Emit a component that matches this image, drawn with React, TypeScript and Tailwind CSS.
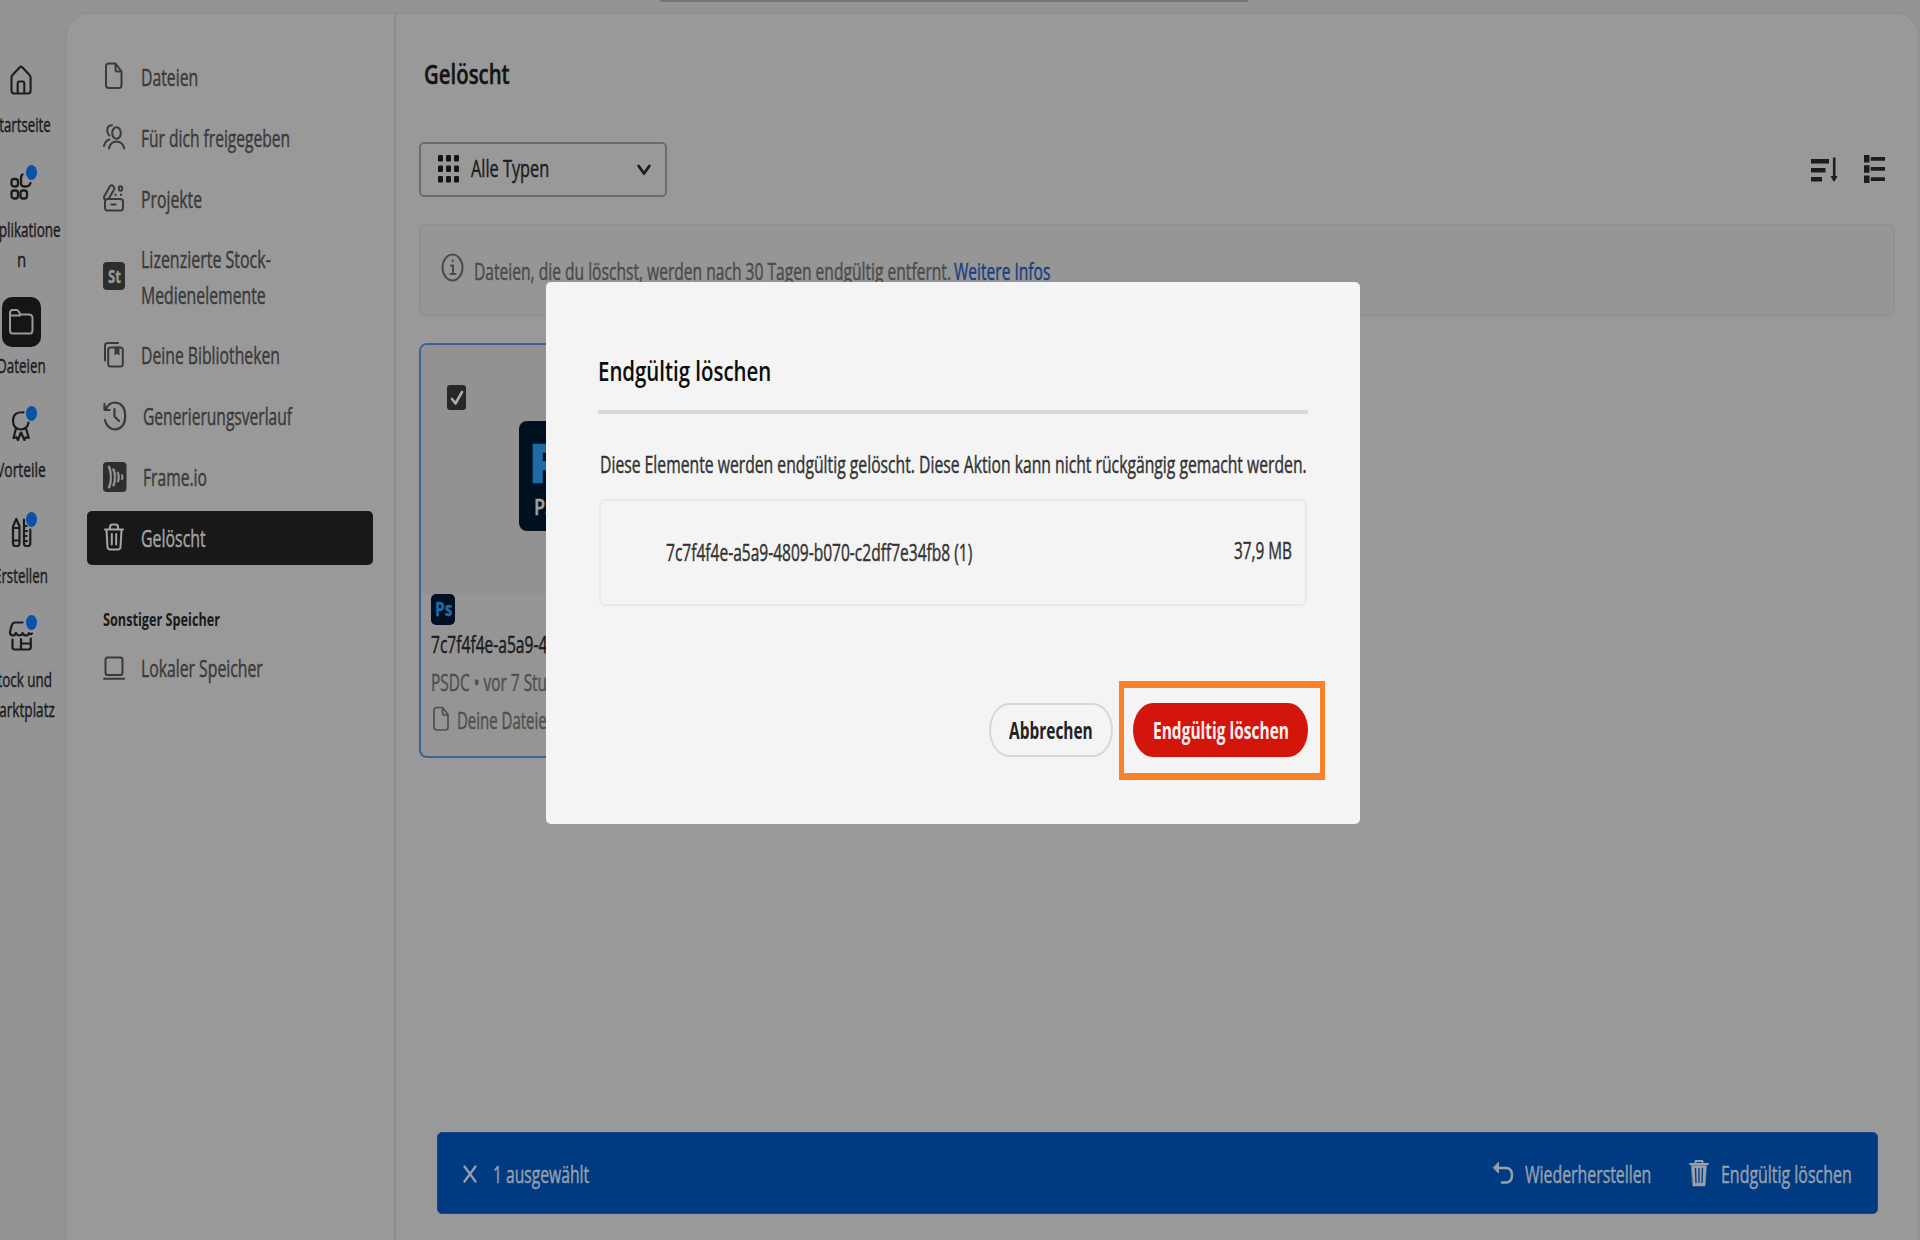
import React, { useLayoutEffect, useRef, useState } from "react";

type FitProps = {
  children: React.ReactNode;
  className: string;
};

// Condensed label: squeezes the text into the width given by its class
const Fit: React.FC<FitProps> = ({ children, className }) => {
  const outer = useRef<HTMLSpanElement>(null);
  const inner = useRef<HTMLSpanElement>(null);
  const [scale, setScale] = useState(1);

  useLayoutEffect(() => {
    if (outer.current && inner.current) {
      setScale(outer.current.clientWidth / inner.current.offsetWidth);
    }
  }, [children]);

  return (
    <span ref={outer} className={`block shrink-0 whitespace-nowrap ${className}`}>
      <span
        ref={inner}
        className="inline-block origin-left"
        style={{ transform: `scaleX(${scale})` }}
      >
        {children}
      </span>
    </span>
  );
};

type IconProps = {
  w: number;
  h: number;
  children: React.ReactNode;
  sw?: number;
  className?: string;
};

const Icon: React.FC<IconProps> = ({ w, h, children, sw = 2, className = "" }) => (
  <svg
    width={w}
    height={h}
    viewBox={`0 0 ${w} ${h}`}
    fill="none"
    stroke="currentColor"
    strokeWidth={sw}
    strokeLinecap="round"
    strokeLinejoin="round"
    className={`shrink-0 ${className}`}
  >
    {children}
  </svg>
);

const FileIcon = () => (
  <Icon w={22} h={28} className="-mt-[3px]">
    <path d="M5.500 1.500h7l6 8v13.500q0 3-2.500 3H5.500q-2.500 0-2.500-3V4.500q0-3 2.500-3zM12.500 2v5q0 2.500 2 2.500h4" />
  </Icon>
);

const UsersIcon = () => (
  <Icon w={22} h={28} className="-mt-[2px]">
    <ellipse cx="13.500" cy="10" rx="4.300" ry="5.800" />
    <path d="M6 25.500q1.500-7 7.500-7t7.800 7M9 2.300Q4 2 4.300 8q.2 3 2 4.500M1 23q1-5 5.500-6.500" />
  </Icon>
);

const ProjectsIcon = () => (
  <Icon w={22} h={28} className="-mt-[2px]">
    <path d="M4.500 15h13q2.500 0 2.500 2.500v6.500q0 2.500-2.500 2.500h-13Q2 26.500 2 24v-6.500Q2 15 4.500 15zM8.500 20.500h4M2 15.500Q.3 14 1.500 12L7 2Q8.500.500 10.300 2.200t.7 3.500L5.500 15" />
    <ellipse cx="17.500" cy="4.500" rx="1.700" ry="2.300" />
    <path d="M12.500 10.500v.5M18 10.500v.5" />
  </Icon>
);

const StockIcon = () => (
  <span className="-mt-[2px] flex h-[28px] w-[22px] shrink-0 items-center justify-center rounded-[4px] bg-[#2e2e2e] text-[17px] font-bold leading-none text-[#999]">
    <Fit className="w-[13px]">St</Fit>
  </span>
);

const LibraryIcon = () => (
  <Icon w={22} h={28}>
    <path d="M2 19.500V4.500Q2 2 4.500 2h10.500M7.500 6.500h10q2.300 0 2.300 2.500v14q0 2.500-2.300 2.500h-10q-2.300 0-2.300-2.500V9q0-2.500 2.300-2.500z" />
    <path d="M12 6.500v7.500l2-2 2 2V6.500z" fill="currentColor" strokeWidth={1} />
  </Icon>
);

const HistoryIcon = () => (
  <Icon w={24} h={32} sw={2.200}>
    <path d="M3 9Q6 2.500 12 2.500q10.200 1 10.200 13.500T12 29.500Q4.500 29 1.800 20M1.500 4v6h5M11.500 9v7.500l4.500 4.500" />
  </Icon>
);

// Filled play mark made of four bars that shrink to the right
const FrameIcon = () => (
  <Icon w={24} h={32} className="text-[#999]">
    <rect x="0" y="1" width="23.500" height="30" rx="4" fill="#2e2e2e" stroke="none" />
    <path
      d="M5 5.500q4.500 10.500 0 21.500h2q3.500-11 0-21.500zM9.500 8q3.500 8 0 17h1.800q3-9 0-17zM14 11.500q2 5 0 9.500h1.800q1.700-4.500 0-9.500zM18.300 14q1.300 2.300 0 4.500h1.500q1-2.200 0-4.500z"
      fill="currentColor"
      strokeWidth={0.6}
    />
  </Icon>
);

const TrashIcon = () => (
  <Icon w={22} h={28} className="-mt-[2px]">
    <path d="M2 6.500h18M7 6V4q0-2.500 2.500-2.500h3Q15 1.500 15 4v2M3.500 7l1 17q.2 2.500 2.500 2.500h8q2.300 0 2.500-2.500l1-17M8.800 11v10.500M13.200 11v10.500" />
  </Icon>
);

const LaptopIcon = () => (
  <Icon w={22} h={28}>
    <path d="M4.500 3.500h13q2 0 2 2.500v12.500q0 2.500-2 2.500h-13q-2 0-2-2.500V6q0-2.500 2-2.500zM1 24.800h20.500" />
  </Icon>
);

const navItems = [
  { icon: <FileIcon />, label: "Dateien", width: "w-[57px]" },
  { icon: <UsersIcon />, label: "Für dich freigegeben", width: "w-[149px]" },
  { icon: <ProjectsIcon />, label: "Projekte", width: "w-[61px]" },
  {
    icon: <StockIcon />,
    label: "Lizenzierte Stock-",
    width: "w-[130px]",
    second: "Medienelemente",
  },
  { icon: <LibraryIcon />, label: "Deine Bibliotheken", width: "w-[139px]" },
  { icon: <HistoryIcon />, label: "Generierungsverlauf", width: "w-[149px]" },
  { icon: <FrameIcon />, label: "Frame.io", width: "w-[64px]" },
  { icon: <TrashIcon />, label: "Gelöscht", width: "w-[65px]", active: true },
];

const Dot = () => (
  <span className="absolute left-[26px] -top-[5px] h-[15px] w-[11px] rounded-[50%] bg-[#0b50ab]" />
);

const RailLabel: React.FC<FitProps> = ({ children, className }) => (
  <Fit className={`h-[30px] text-[20px] leading-[32px] ${className}`}>{children}</Fit>
);

const Rail = () => (
  <nav className="flex w-[42px] shrink-0 flex-col items-center pt-[65px] text-[#1c1c1c]">
    <Icon w={24} h={30} sw={2.100}>
      <path d="M2.500 12.500q0-1.500 1.300-2.800L11 2q1-1 2 0l7.300 7.700q1.300 1.300 1.300 2.800v13q0 3-2.600 3H5q-2.500 0-2.500-3zM8.700 28V19q0-2.500 1.500-2.500h3.600q1.500 0 1.500 2.500v9" />
    </Icon>
    <div className="mt-[14px]">
      <RailLabel className="w-[59px]">Startseite</RailLabel>
    </div>

    <div className="relative mt-[31px] flex w-[42px] flex-col items-center">
      <Icon w={24} h={30} sw={2.300}>
        <rect x="2.500" y="9" width="6.500" height="7.500" rx="2.500" />
        <rect x="2.500" y="20.500" width="6.500" height="8" rx="2.500" />
        <rect x="11.500" y="20.500" width="6.500" height="8" rx="2.500" />
        <path d="M13.500 4.500q-1.500 1-1.500 3.500v5q0 3.500 3 3.500h2.500q3 0 4-3.500" />
      </Icon>
      <Dot />
      <div className="mt-[14px] flex flex-col items-center">
        <RailLabel className="w-[79px]">Applikatione</RailLabel>
        <RailLabel className="w-[9px]">n</RailLabel>
      </div>
    </div>

    <div className="mt-[23px] flex h-[50px] w-[39px] items-center justify-center rounded-[10px] bg-[#151515] text-[#999]">
      <Icon w={26} h={30}>
        <path d="M2 6.500Q2 3 4.500 3h4q1.500 0 2.500 2l1.300 2.500h8.500Q24.500 7.500 24.500 11v12q0 3.500-2.500 3.500H4.500Q2 26.500 2 23zM2 8.500h10" />
      </Icon>
    </div>
    <div className="mt-[3px]">
      <RailLabel className="w-[49px]">Dateien</RailLabel>
    </div>

    <div className="relative mt-[31px] flex w-[42px] flex-col items-center">
      <Icon w={24} h={30} sw={2.200}>
        <path d="M14.500 1.300Q4.500.500 4 9.500q0 8.500 8 9 6.500-.5 7.500-7M7 17.500L4.500 27l3-.8 1.500 3 2.800-7.500M17 17.500l2.800 9.500-3-.8-1.500 3-3-7.500" />
      </Icon>
      <Dot />
      <div className="mt-[13px]">
        <RailLabel className="w-[50px]">Vorteile</RailLabel>
      </div>
    </div>

    <div className="relative mt-[33px] flex w-[42px] flex-col items-center">
      <Icon w={24} h={32} sw={2.200}>
        <path d="M4 9.500L7.300 2l3.200 7.500V26q0 3-2 3H6q-2 0-2-3zM4 11h6.500M4 23.500h6.500M15 2.500V26q0 3 2 3h2q2.300 0 2.300-3V12.500M15.500 9h2M15.500 14h2.500M15.500 19h2M15.500 24h2.500" />
      </Icon>
      <Dot />
      <div className="mt-[11px]">
        <RailLabel className="w-[54px]">Erstellen</RailLabel>
      </div>
    </div>

    <div className="relative mt-[30px] flex w-[42px] flex-col items-center">
      <Icon w={26} h={32} sw={2.200}>
        <path d="M14.500 2.500H7Q4.500 2.500 3.500 6l-1.500 6q0 3.500 3 3.500 2 0 3-2.500 1.300 2.500 3.500 2.500t3-2.500q1 2.500 3.500 2.500t3-2.500q1.500 2 3 .5M4.500 19.500V27q0 2.500 2 2.500h14q2.300 0 2.300-2.500v-8.500M13 19v10M13 23.500h9.500" />
      </Icon>
      <Dot />
      <div className="mt-[12px] flex flex-col items-center">
        <RailLabel className="w-[62px]">Stock und</RailLabel>
        <RailLabel className="w-[68px]">Marktplatz</RailLabel>
      </div>
    </div>
  </nav>
);

const Sidebar = () => (
  <aside className="flex w-[329px] shrink-0 flex-col border-r-2 border-[#8b8b8b] pl-[20px] pt-[36px] text-[23px] text-[#3a3a3a]">
    <div className="flex w-[286px] flex-col gap-[7px]">
      {navItems.map((item) => (
        <div
          key={item.label}
          className={`flex items-center gap-4 rounded-[5px] pl-4 ${
            item.second ? "h-[88px]" : "h-[54px]"
          } ${item.active ? "bg-[#181818] text-[#a5a5a5]" : ""}`}
        >
          {item.icon}
          <div className="leading-[36px]">
            <Fit className={item.width}>{item.label}</Fit>
            {item.second && <Fit className="w-[125px]">{item.second}</Fit>}
          </div>
        </div>
      ))}
    </div>
    <div className="mb-[10px] mt-[42px] pl-4 text-[18px] font-bold leading-6 text-[#191919] [-webkit-text-stroke:0px]">
      <Fit className="w-[117px]">Sonstiger Speicher</Fit>
    </div>
    <div className="flex h-[54px] items-center gap-4 pl-4">
      <LaptopIcon />
      <Fit className="w-[122px]">Lokaler Speicher</Fit>
    </div>
  </aside>
);

const FileCard = () => (
  <div className="mt-[27px] flex h-[415px] w-[286px] flex-col overflow-hidden rounded-[8px] border-2 border-[#3b6299] bg-[#959595]">
    <div className="flex h-[249px] shrink-0 flex-col bg-[#929292] pl-[26px] pt-[40px]">
      <div className="flex h-[25px] w-[19px] items-center justify-center rounded-[3px] bg-[#272727] text-[#aaa]">
        <Icon w={14} h={18} sw={2.600}>
          <path d="M2 10l3.500 4.500L12 3" />
        </Icon>
      </div>
      <div className="ml-[72px] mt-[11px] flex h-[110px] w-[88px] flex-col rounded-[8px] bg-[#001021] pl-[10px] pt-[14px]">
        <Fit className="w-[58px] text-[54px] font-extrabold leading-[54px] text-[#1d6ba5]">Ps</Fit>
        <Fit className="ml-[5px] w-[46px] text-[22px] font-semibold leading-[34px] text-[#a0a0a0]">
          PSDC
        </Fit>
      </div>
    </div>
    <div className="flex flex-col pl-[10px] text-[23px] leading-[38px] text-[#4f4f4f]">
      <div className="flex h-[31px] w-[24px] items-center justify-center rounded-[5px] bg-[#001021] text-[19px] font-bold leading-none text-[#1d6ba5]">
        <Fit className="w-[17px]">Ps</Fit>
      </div>
      <Fit className="w-[285px] text-[#1a1a1a]">7c7f4f4e-a5a9-4809-b070-c2dff7e34fb8</Fit>
      <Fit className="w-[153px]">PSDC • vor 7 Stunden</Fit>
      <div className="flex items-center gap-[6px]">
        <Icon w={20} h={26} sw={1.700} className="-mt-[2px]">
          <path d="M5.500 1.500h6l5.500 7V21q0 3-2.500 3h-9Q3 24 3 21V4.500q0-3 2.500-3zM11.500 2v4.500q0 2.500 2 2.500H17" />
        </Icon>
        <Fit className="w-[99px]">Deine Dateien</Fit>
      </div>
    </div>
  </div>
);

const SelectionBar = () => (
  <div className="mb-[26px] ml-[18px] mr-[17px] mt-auto flex h-[82px] shrink-0 items-center rounded-[5px] border border-[#164687] bg-[#003b82] pl-[25px] pr-[25px] pt-[2px] text-[23px] text-[#98a0ad]">
    <Icon w={14} h={18} sw={2.200}>
      <path d="M1.500 1.500l11 15M12.500 1.500l-11 15" />
    </Icon>
    <Fit className="ml-[16px] w-[96px]">1 ausgewählt</Fit>
    <Icon w={22} h={26} sw={2.400} className="-mt-[3px] ml-auto">
      <path d="M6 8h8.500q5.500.500 5.500 7.300t-5.500 7.200H10" />
      <path d="M6.500 2.500v10.500L1.500 8z" fill="currentColor" strokeWidth={1} />
    </Icon>
    <Fit className="ml-[11px] w-[126px]">Wiederherstellen</Fit>
    <Icon w={20} h={28} sw={1.800} className="-mt-[2px] ml-[38px]">
      <path d="M1 5h18M6.500 4.500V2h7v2.500" />
      <path d="M2.500 6.500h15L16 27H4z" fill="currentColor" strokeWidth={0.5} />
      <path d="M6.500 9.500l.5 14M10 9.500v14M13.500 9.500l-.5 14" stroke="#003b82" strokeWidth={1.300} />
    </Icon>
    <Fit className="ml-[12px] w-[131px]">Endgültig löschen</Fit>
  </div>
);

const Content = () => (
  <main className="flex flex-1 flex-col pl-[23px] pr-[23px] pt-[42px] text-[#1c1c1c]">
    <Fit className="ml-[5px] h-[36px] w-[86px] text-[27px] font-semibold leading-[36px] text-[#141414]">
      Gelöscht
    </Fit>
    <div className="mt-[50px] flex items-center">
      <div className="flex h-[55px] w-[248px] items-center rounded-[5px] border-2 border-[#6c6c6c] pb-[2px] pl-[17px] pr-[14px]">
        <Icon w={21} h={28}>
          {[0, 8, 16].map((x) =>
            [0, 10.5, 21].map((y) => (
              <rect
                key={`${x}-${y}`}
                x={x}
                y={y}
                width="5"
                height="6.500"
                rx="1.300"
                fill="#141414"
                stroke="none"
              />
            )),
          )}
        </Icon>
        <Fit className="ml-[12px] w-[78px]  text-[23px]">Alle Typen</Fit>
        <Icon w={14} h={12} sw={2.800} className="ml-auto mt-[2px]">
          <path d="M1.700 2l5.300 7.500L12.300 2" />
        </Icon>
      </div>
      <Icon w={28} h={28} className="-mt-[2px] ml-auto">
        <path d="M0 4h18v4.500H0zM0 13h14.500v4.500H0zM0 22h11v4.500H0z" fill="currentColor" stroke="none" />
        <path d="M23.200 3.500v20" strokeWidth={2.600} />
        <path d="M20.500 21.500h5.400l-2.700 4.500z" fill="currentColor" strokeWidth={1} />
      </Icon>
      <Icon w={21} h={28} className="-mt-[2px] ml-[25px] mr-[10px]">
        <path
          d="M0 0h5.500v7.500H0zM0 10.300h5.500v7.400H0zM0 20.500h5.500V28H0zM6.800 2h14.200v3.700H6.800zM6.800 12h14.200v3.700H6.800zM6.800 22.300h14.200V26H6.800z"
          fill="currentColor"
          stroke="none"
        />
      </Icon>
    </div>
    <div className="mt-[27px] flex h-[92px] items-start rounded-[6px] border-2 border-[#919191] bg-[#969696] pl-[20px] pt-[27px] text-[23px] leading-[36px] text-[#4b4b4b]">
      <Icon w={23} h={29} sw={2}>
        <ellipse cx="11.500" cy="14.500" rx="10" ry="13" />
        <path d="M10 12.500h2V21M9.500 21h5M11.700 7.500v.8" />
      </Icon>
      <Fit className="ml-[10px] w-[477px]">
        Dateien, die du löschst, werden nach 30 Tagen endgültig entfernt.
      </Fit>
      <Fit className="ml-[3px] w-[96px] text-[#163f80]">Weitere Infos</Fit>
    </div>
    <FileCard />
    <SelectionBar />
  </main>
);

const DeleteDialog = () => (
  <div className="absolute left-[546px] top-[282px] flex h-[542px] w-[814px] flex-col rounded-[5px] bg-[#f4f4f4] px-[52px] text-[23px] text-[#333]">
    <Fit className="mt-[71px] w-[173px] text-[27px] font-semibold leading-[36px] text-[#0d0d0d] [-webkit-text-stroke:0px]">
      Endgültig löschen
    </Fit>
    <div className="mt-[21px] h-[4px] bg-[#d8d8d8]" />
    <Fit className="ml-[2px] mt-[35px] w-[707px] leading-[30px]">
      Diese Elemente werden endgültig gelöscht. Diese Aktion kann nicht rückgängig gemacht werden.
    </Fit>
    <div className="ml-[1px] mr-[1px] mt-[20px] flex h-[107px] items-center justify-between rounded-[6px] border-2 border-[#e9e9e9] pl-[65px] pr-[13px]">
      <Fit className="w-[306px]">7c7f4f4e-a5a9-4809-b070-c2dff7e34fb8 (1)</Fit>
      <Fit className="-mt-[4px] w-[58px]">37,9 MB</Fit>
    </div>
    <div className="mt-[97px] flex justify-end gap-[20px] font-bold [-webkit-text-stroke:0px]">
      <button className="flex h-[54px] w-[124px] items-center justify-center rounded-[20px/27px] border-2 border-[#d7d7d7] text-[#222]">
        <Fit className="w-[84px]">Abbrechen</Fit>
      </button>
      <div className="relative">
        <button className="flex h-[54px] w-[175px] items-center justify-center rounded-[20px/27px] bg-[#d3150c] text-[#fdf0ef]">
          <Fit className="w-[136px]">Endgültig löschen</Fit>
        </button>
        <div className="absolute -left-[14px] -top-[22px] h-[99px] w-[206px] border-x-[5px] border-y-[7px] border-[#fa8129]" />
      </div>
    </div>
  </div>
);

const App = () => {
  return (
    <div className="relative flex h-[1240px] w-[1920px] overflow-hidden bg-[#949494] font-['Open_Sans','Noto_Sans',sans-serif] [-webkit-text-stroke:0.45px]">
      <div className="absolute left-[660px] top-0 h-[2px] w-[588px] rounded-b-[4px] bg-[#747474]" />
      <Rail />
      <div className="ml-[25px] mr-[2px] mt-[14px] flex flex-1 rounded-t-[22px] bg-[#999] shadow-[0_0_4px_rgba(0,0,0,0.08)]">
        <Sidebar />
        <Content />
      </div>
      <DeleteDialog />
    </div>
  );
};

export default App;
